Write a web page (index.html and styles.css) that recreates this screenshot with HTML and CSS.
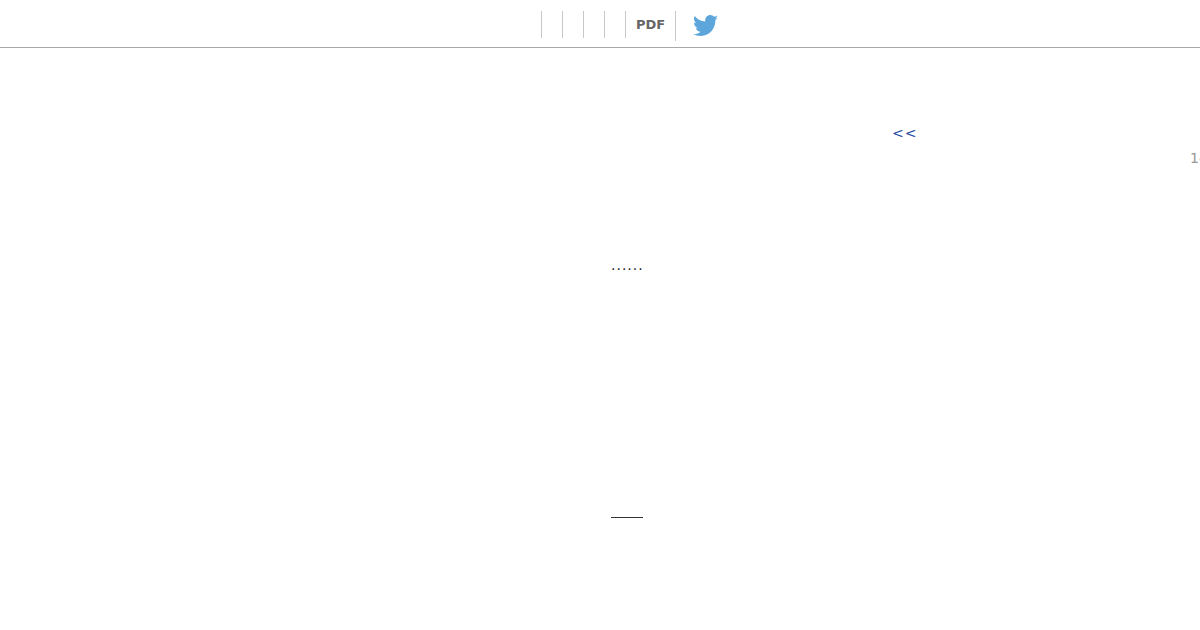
FILE: index.html
```html
<!DOCTYPE html>
<html lang="en">
<head>
  <meta charset="UTF-8">
  <title>Document</title>
  <link rel="stylesheet" href="styles.css">
</head>
<body>
  <header class="toolbar">
    <div class="tool"></div>
    <div class="tool"></div>
    <div class="tool"></div>
    <div class="tool"></div>
    <div class="tool pdf">PDF</div>
    <div class="tool share">
      <svg class="twitter" viewBox="0 0 24 20" width="25" height="22" preserveAspectRatio="none">
        <path fill="#5ca6dc" d="M24 2.4c-.9.4-1.8.7-2.8.8 1-.6 1.800-1.600 2.200-2.700-1 .6-2 1-3.100 1.200C19.300.7 18 0 16.600 0c-2.700 0-4.900 2.200-4.900 4.900 0 .4 0 .8.100 1.100C7.700 5.800 4.100 3.800 1.700.9c-.4.700-.7 1.600-.7 2.500 0 1.700.9 3.200 2.200 4.100-.8 0-1.600-.2-2.200-.6v.1c0 2.400 1.700 4.400 3.900 4.800-.4.100-.8.200-1.300.2-.3 0-.6 0-.9-.1.600 2 2.400 3.400 4.600 3.400-1.700 1.300-3.800 2.100-6.100 2.100-.4 0-.8 0-1.200-.1C2.200 18.300 4.800 19.100 7.500 19.100c9.100 0 14-7.500 14-14v-.6c1-.7 1.800-1.500 2.500-2.100z"/>
      </svg>
    </div>
  </header>
  <main class="page">
    <a class="back" href="#">&lt;&lt;</a>
    <div class="page-no">14</div>
    <div class="dots">......</div>
    <div class="blank"></div>
  </main>
</body>
</html>
```

FILE: styles.css
```css
html, body {
  margin: 0;
  height: 630px;
  overflow: hidden;
  background-color: #fff;
}

body {
  font-family: "DejaVu Sans", sans-serif;
}

.toolbar {
  height: 47px;
  box-sizing: border-box;
  padding: 11px 0 0 541px;
  display: flex;
  align-items: flex-start;
  box-shadow: 0 1px 0 #a8a8a8;
}

.toolbar .tool {
  width: 20px;
  height: 27px;
  border-left: 1px solid #c8c8c8;
}

.toolbar .pdf {
  width: 49px;
  text-align: center;
  font-size: 13px;
  font-weight: 700;
  line-height: 27px;
  color: #666;
}

.toolbar .share {
  width: auto;
  height: 30px;
  padding: 4px 0 0 17px;
  box-sizing: border-box;
}

.twitter {
  display: block;
}

.page {
  display: flex;
  flex-direction: column;
  padding-top: 76px;
}

.back {
  margin-left: 892px;
  font-size: 14px;
  line-height: 20px;
  letter-spacing: 1px;
  color: #1d4a9f;
  text-decoration: none;
}

.page-no {
  margin: 5px 0 0 1190px;
  width: 30px;
  font-size: 14px;
  line-height: 20px;
  color: #999;
  white-space: nowrap;
}

.dots {
  margin: 87px 0 0 611px;
  font-size: 14px;
  line-height: 20px;
  letter-spacing: 1px;
  color: #222;
}

.blank {
  margin: 242px 0 0 611px;
  width: 32px;
  border-top: 1px solid #333;
}
```
